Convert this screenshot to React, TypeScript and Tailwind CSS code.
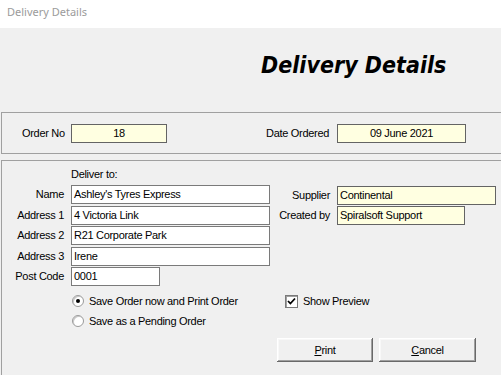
import React from "react"

function Field({ value, className = "", yellow = false, center = false }: { value: string; className?: string; yellow?: boolean; center?: boolean }) {
  return (
    <div
      className={`h-[19px] border leading-[17px] px-[2px] whitespace-nowrap overflow-hidden ${
        yellow ? "bg-[#ffffe1] border-[#646464]" : "bg-white border-[#7a7a7a]"
      } ${center ? "text-center" : ""} ${className}`}
    >
      {value}
    </div>
  )
}

function Row({ label, value, width = "w-[199px]" }: { label: string; value: string; width?: string }) {
  return (
    <div className="flex items-center">
      <span className="w-[62px] text-right">{label}</span>
      <Field value={value} className={`ml-[7px] ${width}`} />
    </div>
  )
}

function Radio({ checked }: { checked?: boolean }) {
  return (
    <span className="w-[12px] h-[12px] rounded-full bg-white border border-[#9a9a9a] shadow-[inset_1px_1px_0_#c8c8c8] flex items-center justify-center">
      {checked && <span className="w-[4px] h-[4px] rounded-full bg-black" />}
    </span>
  )
}

function Button({ children, width }: { children: React.ReactNode; width: string }) {
  return (
    <button
      className={`${width} h-[24px] bg-[#f0f0f0] shadow-[inset_-1px_-1px_0_#696969,inset_1px_1px_0_#ffffff,inset_-2px_-2px_0_#a0a0a0,inset_2px_2px_0_#f8f8f8] flex items-center justify-center`}
    >
      {children}
    </button>
  )
}

export default function App() {
  return (
    <div className="w-[501px] h-[375px] overflow-hidden flex flex-col bg-[#f0f0f0] text-black text-[11px] tracking-[-0.3px] font-['Liberation_Sans',Arial,sans-serif]">
      {/* title bar */}
      <div className="h-[28px] bg-white shrink-0 pl-[7px] pt-[5px] leading-[14px] text-[11px] tracking-normal text-[#9b9b9b] font-['Noto_Sans',sans-serif]">
        Delivery Details
      </div>

      {/* heading */}
      <div className="h-[84px] shrink-0 pl-[261px] pt-[23px]">
        <h1 className="text-[23px] leading-[28px] tracking-normal font-bold italic font-['DejaVu_Sans_Condensed','DejaVu_Sans',sans-serif]">
          Delivery Details
        </h1>
      </div>

      {/* order group */}
      <div className="ml-[1px] h-[42px] shrink-0 border-l border-t border-b border-[#a0a0a0] flex items-center pl-[20px]">
        <span className="w-[49px]">Order No</span>
        <Field value="18" yellow center className="w-[96px] h-[18px] leading-[16px]" />
        <span className="ml-[99px] w-[71px]">Date Ordered</span>
        <Field value="09 June 2021" yellow center className="w-[129px] h-[18px] leading-[16px]" />
      </div>

      {/* delivery group */}
      <div className="ml-[1px] mt-[6px] flex-1 border-l border-t border-[#a0a0a0] pt-[7px]">
        <div className="flex">
          <div className="w-[268px] flex flex-col">
            <div className="pl-[69px] leading-[13px] h-[13px]">Deliver to:</div>
            <div className="mt-[4px] flex flex-col gap-[1.5px]">
              <Row label="Name" value="Ashley's Tyres Express" />
              <Row label="Address 1" value="4 Victoria Link" />
              <Row label="Address 2" value="R21 Corporate Park" />
              <Row label="Address 3" value="Irene" />
              <Row label="Post Code" value="0001" width="w-[89px]" />
            </div>
          </div>
          <div className="pt-[18px] flex flex-col gap-[1px]">
            <div className="flex items-center">
              <span className="w-[60px] text-right">Supplier</span>
              <Field value="Continental" yellow className="ml-[7px] w-[159px]" />
            </div>
            <div className="flex items-center">
              <span className="w-[60px] text-right">Created by</span>
              <Field value="Spiralsoft Support" yellow className="ml-[7px] w-[128px]" />
            </div>
          </div>
        </div>

        <div className="mt-[5px] flex">
          <div className="w-[283px] pl-[70px] flex flex-col">
            <label className="h-[20px] flex items-center gap-[5px]">
              <Radio checked />
              <span>Save Order now and Print Order</span>
            </label>
            <label className="h-[20px] flex items-center gap-[5px]">
              <Radio />
              <span>Save as a Pending Order</span>
            </label>
          </div>
          <label className="h-[20px] flex items-center gap-[5px]">
            <span className="w-[13px] h-[13px] bg-white border border-[#7a7a7a] shadow-[inset_1px_1px_0_#a0a0a0] flex items-center justify-center">
              <svg width="9" height="9" viewBox="0 0 9 9">
                <polyline points="1,4 3.4,6.5 8,1.5" fill="none" stroke="#000" strokeWidth="1.8" />
              </svg>
            </span>
            <span>Show Preview</span>
          </label>
        </div>

        <div className="mt-[7px] pl-[275px] flex gap-[6px]">
          <Button width="w-[96px]">
            <span><span className="underline">P</span>rint</span>
          </Button>
          <Button width="w-[97px]">
            <span><span className="underline">C</span>ancel</span>
          </Button>
        </div>
      </div>
    </div>
  )
}
